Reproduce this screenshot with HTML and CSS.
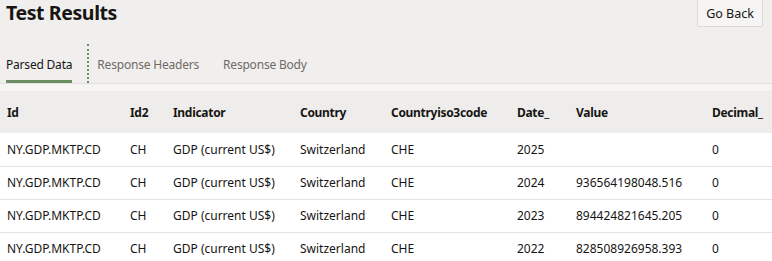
FILE: index.html
```html
<!DOCTYPE html>
<html lang="en">

<head>
    <meta charset="UTF-8">
    <title>Test Results</title>
    <link rel="stylesheet" href="styles.css">
</head>

<body>
    <div class="top">
        <h1 class="title">Test Results</h1>
        <button class="btn">Go Back</button>
    </div>
    <ul class="tabs">
        <li class="tab current">Parsed Data</li>
        <li class="sep"></li>
        <li class="tab">Response Headers</li>
        <li class="tab">Response Body</li>
    </ul>
    <div class="strip"></div>
    <table class="grid">
        <colgroup>
            <col style="width:123px">
            <col style="width:43px">
            <col style="width:127px">
            <col style="width:91px">
            <col style="width:126px">
            <col style="width:59px">
            <col style="width:136px">
            <col>
        </colgroup>
        <thead>
            <tr>
                <th>Id</th>
                <th>Id2</th>
                <th>Indicator</th>
                <th>Country</th>
                <th>Countryiso3code</th>
                <th>Date_</th>
                <th>Value</th>
                <th>Decimal_</th>
            </tr>
        </thead>
        <tbody>
            <tr>
                <td>NY.GDP.MKTP.CD</td><td>CH</td><td>GDP (current US$)</td><td>Switzerland</td><td>CHE</td><td>2025</td><td></td><td>0</td>
            </tr>
            <tr>
                <td>NY.GDP.MKTP.CD</td><td>CH</td><td>GDP (current US$)</td><td>Switzerland</td><td>CHE</td><td>2024</td><td>936564198048.516</td><td>0</td>
            </tr>
            <tr>
                <td>NY.GDP.MKTP.CD</td><td>CH</td><td>GDP (current US$)</td><td>Switzerland</td><td>CHE</td><td>2023</td><td>894424821645.205</td><td>0</td>
            </tr>
            <tr>
                <td>NY.GDP.MKTP.CD</td><td>CH</td><td>GDP (current US$)</td><td>Switzerland</td><td>CHE</td><td>2022</td><td>828508926958.393</td><td>0</td>
            </tr>
        </tbody>
    </table>
</body>

</html>
```

FILE: styles.css
```css
* {
    margin: 0;
    padding: 0;
    list-style: none;
    box-sizing: border-box;
}

body {
    width: 772px;
    height: 261px;
    overflow: hidden;
    background-color: #f1efed;
    font-family: "Noto Sans", "Open Sans", sans-serif;
    font-size: 12px;
    color: #161513;
}

.top {
    display: flex;
    justify-content: space-between;
    align-items: flex-start;
    height: 44px;
    padding: 0 9px 0 6px;
}

.title {
    font-size: 19.5px;
    font-weight: 700;
    line-height: 26px;
    letter-spacing: -0.4px;
}

.btn {
    width: 66px;
    height: 28px;
    margin-top: -1px;
    border: 1px solid #dcd9d5;
    border-radius: 2px;
    background-color: #f6f5f4;
    font-family: inherit;
    font-size: 12.5px;
    color: #161513;
}

.tabs {
    display: flex;
    height: 40px;
    padding-left: 6px;
    border-bottom: 1px solid #e3e1de;
}

.tab {
    display: flex;
    flex-shrink: 0;
    align-items: center;
    margin-right: 24px;
    padding-top: 2px;
    color: #6f6a66;
    letter-spacing: -0.2px;
    white-space: nowrap;
}

.tab.current {
    margin-right: 15px;
    padding-top: 5px;
    color: #161513;
    border-bottom: 3px solid #6b8f63;
}

.sep {
    flex-shrink: 0;
    margin-right: 8px;
    border-left: 2px dotted #6b8f63;
}

.strip {
    height: 7px;
    background-color: #f6f5f3;
}

.grid {
    width: 772px;
    table-layout: fixed;
    border-collapse: collapse;
    background-color: #fff;
}

.grid th {
    height: 42px;
    padding-left: 7px;
    text-align: left;
    font-weight: 700;
    letter-spacing: -0.3px;
    background-color: #efedeb;
    white-space: nowrap;
}

.grid td {
    height: 33px;
    padding-left: 7px;
    border-bottom: 1px solid #e6e4e1;
    white-space: nowrap;
}
```
